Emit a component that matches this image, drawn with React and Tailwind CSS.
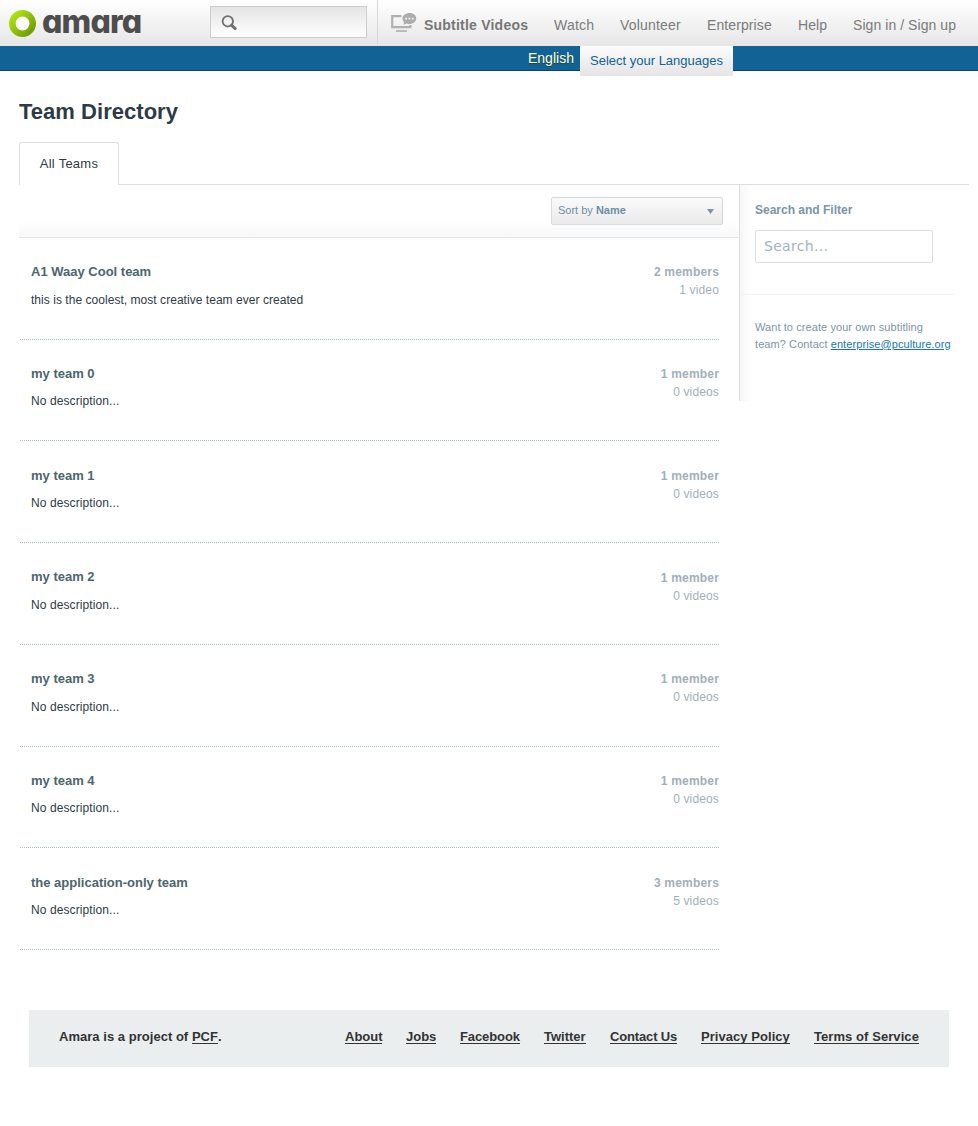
import React from "react";

const teams = [
  { name: "A1 Waay Cool team", description: "this is the coolest, most creative team ever created", members: "2 members", videos: "1 video", row: "h-[102px]", title: "mt-[24px]", text: "mt-[9px] tracking-[0.04px]", stats: "mt-[25px]" },
  { name: "my team 0", description: "No description...", members: "1 member", videos: "0 videos", row: "h-[101px]", title: "mt-[24px]", text: "mt-[8px] tracking-[0.1px]", stats: "mt-[25px]" },
  { name: "my team 1", description: "No description...", members: "1 member", videos: "0 videos", row: "h-[102px]", title: "mt-[25px]", text: "mt-[8px] tracking-[0.1px]", stats: "mt-[26px]" },
  { name: "my team 2", description: "No description...", members: "1 member", videos: "0 videos", row: "h-[102px]", title: "mt-[24px]", text: "mt-[9px] tracking-[0.1px]", stats: "mt-[26px]" },
  { name: "my team 3", description: "No description...", members: "1 member", videos: "0 videos", row: "h-[102px]", title: "mt-[24px]", text: "mt-[9px] tracking-[0.1px]", stats: "mt-[25px]" },
  { name: "my team 4", description: "No description...", members: "1 member", videos: "0 videos", row: "h-[101px]", title: "mt-[24px]", text: "mt-[8px] tracking-[0.1px]", stats: "mt-[25px]" },
  { name: "the application-only team", description: "No description...", members: "3 members", videos: "5 videos", row: "h-[102px]", title: "mt-[25px]", text: "mt-[8px] tracking-[0.1px]", stats: "mt-[26px]" },
];

const nav = [
  ["Watch", "w-[66px] tracking-[0.2px]"],
  ["Volunteer", "w-[87px] tracking-[0.2px]"],
  ["Enterprise", "w-[91px] tracking-[0.1px]"],
  ["Help", "w-[55px] tracking-[0.1px]"],
  ["Sign in / Sign up", "tracking-[0.06px]"],
];

const footerLinks = [
  ["About", "w-[37px]"],
  ["Jobs", "w-[30px]"],
  ["Facebook", "w-[60px] tracking-[-0.1px]"],
  ["Twitter", "w-[42px]"],
  ["Contact Us", "w-[67px] tracking-[-0.15px]"],
  ["Privacy Policy", "w-[89px] tracking-[0.05px]"],
  ["Terms of Service", "w-[105px] tracking-[0.07px]"],
];

function Header() {
  return (
    <header className="flex h-[46px] bg-linear-to-b from-white to-[#e6e6e6]">
      <a className="flex w-[210px] pl-[9px]">
        <svg className="mt-[10px] h-[27px] w-[27px] shrink-0" viewBox="0 0 27 27">
          <defs>
            <linearGradient id="ring" x1="0" y1="0" x2="1" y2="1">
              <stop offset="0.1" stopColor="#abe00f" />
              <stop offset="0.9" stopColor="#74a00a" />
            </linearGradient>
          </defs>
          <circle cx="13.5" cy="13.5" r="10.2" fill="#fff" stroke="url(#ring)" strokeWidth="6.6" />
        </svg>
        <span className="ml-[6px] mt-[4px] font-['Inter'] text-[32px] leading-[36px] font-extrabold tracking-[-0.8px] text-[#4d4d4d] [font-feature-settings:'cv11']">amara</span>
      </a>
      <div className="mt-[6px] h-[32px] w-[157px] shrink-0 border border-[#ccc] bg-linear-to-b from-[#e4e4e4] to-white pl-[10px] pt-[8px]">
        <svg className="h-[17px] w-[17px]" viewBox="0 0 17 17" fill="none" stroke="#707070">
          <circle cx="6.8" cy="6.3" r="5.2" strokeWidth="1.8" />
          <path d="M10.5 10.200 14.2 13.6" strokeWidth="3" strokeLinecap="round" />
        </svg>
      </div>
      <div className="ml-[10px] h-[44px] w-px shrink-0 bg-[#d8d8d8]" />
      <nav className="flex pt-[15px] text-[14px] leading-[20px] whitespace-nowrap text-[#7b7b7b]">
        <svg className="-mt-[2px] ml-[13px] h-[20px] w-[26px] shrink-0" viewBox="0 0 26 20" fill="none">
          <path d="M10.5 3.200H1.2V14.2H19.4V12" stroke="#b0b0b0" strokeWidth="2.2" />
          <path d="M5 18H16" stroke="#b0b0b0" strokeWidth="1.7" />
          <path d="M18.500 0c4 0 6.7 2.4 6.7 5.4s-3 5.500-6.8 5.500c-1 0-2-.1-2.9-.5L12.500 11.8l.5-2.9c-1-.9-1.500-2-1.500-3.4C11.500 2.400 14.500 0 18.500 0Z" fill="#adadad" />
          <path d="M14.200 4.800h1.8v1.800h-1.800zM17.500 4.800h1.800v1.800h-1.800zM20.800 4.800h1.800v1.800h-1.800z" fill="#eee" />
        </svg>
        <a className="ml-[7px] w-[130px] font-bold tracking-[0.22px] text-[#777]">Subtitle Videos</a>
        {nav.map(([label, style]) => <a key={label} className={style}>{label}</a>)}
      </nav>
    </header>
  );
}

function LanguageBar() {
  return (
    <div className="flex h-[25px] border-b border-[#0b4268] bg-[#136295] whitespace-nowrap">
      <span className="ml-[528px] w-[52px] shrink-0 text-[14px] leading-[24px] text-[#ffffe8] [text-shadow:0_1px_1px_#164d1d]">English</span>
      <a className="h-[30px] w-[153px] shrink-0 bg-linear-to-b from-[#fbfbfb] to-[#e5e5e5] pl-[10px] text-[13px] leading-[30px] text-[#136295]">Select your Languages</a>
    </div>
  );
}

function Team({ team }) {
  return (
    <li className={"ml-px flex w-[699px] justify-between border-b border-dotted border-[#a9bdc8] pl-[11px] whitespace-nowrap " + team.row}>
      <div>
        <h3 className={"text-[13px] leading-[20px] font-bold text-[#4b666e] " + team.title}>{team.name}</h3>
        <p className={"text-[12px] leading-[18px] text-[#2d3b46] " + team.text}>{team.description}</p>
      </div>
      <div className={"text-right text-[12px] leading-[18px] text-[#9fb0bc] " + team.stats}>
        <p className="font-bold tracking-[0.18px]">{team.members}</p>
        <p className="tracking-[0.14px]">{team.videos}</p>
      </div>
    </li>
  );
}

function Sidebar() {
  return (
    <aside className="h-[216px] w-[230px] border-l border-[#dcdfe1] bg-linear-to-r from-[#f6f6f6] to-white to-[12px] pl-[15px] text-[#7a96a8]">
      <h2 className="pt-[16px] text-[12px] leading-[18px] font-bold">Search and Filter</h2>
      <input className="mt-[11px] block h-[33px] w-[178px] rounded-[2px] border border-[#d9dee1] bg-white px-[8px] pb-[2px] font-['DejaVu_Sans'] text-[14px] tracking-[0.3px] placeholder:text-[#9fb4c0]" placeholder="Search..." />
      <div className="mt-[31px] -ml-[15px] h-px w-[214px] bg-[#f1f3f4]" />
      <p className="mt-[24px] text-[11px] leading-[17px] tracking-[0.08px] whitespace-nowrap">
        Want to create your own subtitling<br />
        team? Contact <a className="text-[#1678ad] underline">enterprise@pculture.org</a>
      </p>
    </aside>
  );
}

export default function App() {
  return (
    <div className="h-[1126px] w-[978px] overflow-hidden bg-white font-['Liberation_Sans',sans-serif]">
      <Header />
      <LanguageBar />
      <main className="ml-[19px] w-[950px]">
        <h1 className="pt-[25px] text-[22px] leading-[32px] font-bold tracking-[0.03px] text-[#2d3b46]">Team Directory</h1>
        <div className="mt-[14px] flex h-[43px]">
          <div className="w-[100px] rounded-t-[3px] border border-b-0 border-[#d9e0e4] text-center text-[13px] leading-[42px] tracking-[0.25px] text-[#2d3b46]">All Teams</div>
          <div className="flex-1 border-b border-[#dadfe2]" />
        </div>
        <div className="flex items-start">
          <section className="w-[720px]">
            <div className="flex h-[53px] justify-end border-b border-[#e4e7e9] bg-linear-to-b from-white from-70% to-[#f8f8f8] pr-[16px] pt-[12px]">
              <button className="flex h-[28px] w-[172px] items-center justify-between rounded-[2px] border border-[#d5dce1] bg-linear-to-b from-[#fafafa] to-[#eaeaea] pr-[8px] pb-[2px] pl-[6px] text-[11px] text-[#6b8fa8]">
                <span>Sort by <b>Name</b></span>
                <svg className="mt-[3px] h-[5px] w-[7px]" viewBox="0 0 7 5"><path d="M0 0h7L3.500 5Z" fill="#7897a8" /></svg>
              </button>
            </div>
            <ul>{teams.map((team) => <Team key={team.name} team={team} />)}</ul>
          </section>
          <Sidebar />
        </div>
      </main>
      <footer className="mt-[60px] ml-[29px] flex h-[57px] w-[920px] justify-between bg-[#eaeeef] px-[30px] pt-[19px] text-[13px] leading-[16px] font-bold whitespace-nowrap text-[#333]">
        <p className="tracking-[0.03px]">Amara is a project of <a className="inline-block h-[15px] border-b border-[#333]">PCF</a>.</p>
        <nav className="flex h-[15px] gap-[24px]">
          {footerLinks.map(([label, style]) => <a key={label} className={"border-b border-[#333] " + style}>{label}</a>)}
        </nav>
      </footer>
    </div>
  );
}
